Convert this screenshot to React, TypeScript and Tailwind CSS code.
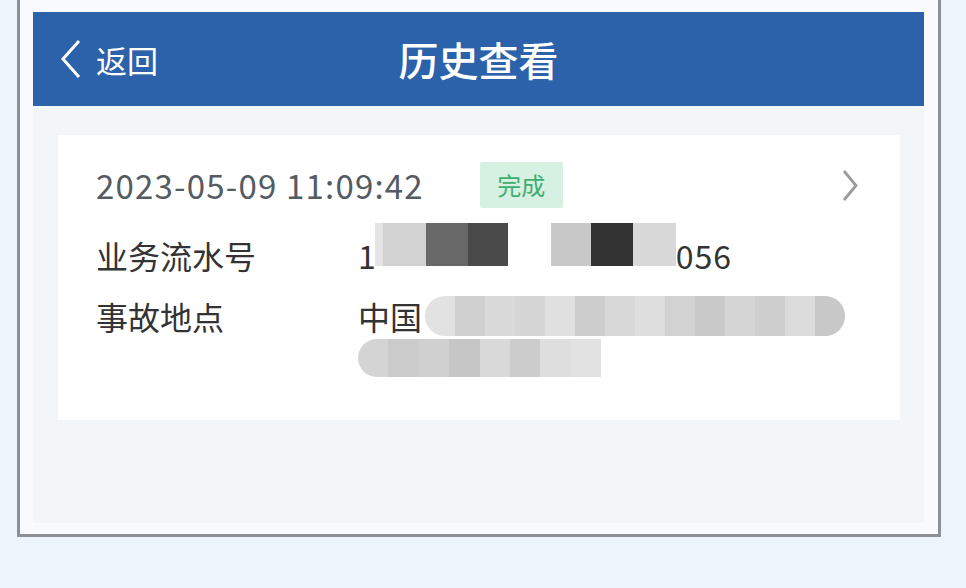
import React from "react";

const font = { fontFamily: '"Noto Sans CJK SC", "Noto Sans", sans-serif' };

// mosaic cells for the blurred serial number
const serialCells = [
  { w: 43, c: "bg-[#d2d2d2]" },
  { w: 42, c: "bg-[#686868]" },
  { w: 40, c: "bg-[#4a4a4a]" },
  { w: 43, c: "bg-white" },
  { w: 40, c: "bg-[#c8c8c8]" },
  { w: 42, c: "bg-[#333333]" },
  { w: 43, c: "bg-[#d8d8d8]" },
];

const addrTop = ["#e2e2e2", "#d0d0d0", "#dadada", "#d6d6d6", "#e0e0e0", "#cdcdcd", "#d8d8d8", "#dedede", "#d2d2d2", "#c9c9c9", "#d5d5d5", "#cfcfcf", "#dcdcdc", "#c8c8c8"];
const addrBottom = ["#d4d4d4", "#cbcbcb", "#d0d0d0", "#c6c6c6", "#d9d9d9", "#cccccc", "#dedede", "#e2e2e2"];

export default function App() {
  return (
    <div className="w-[966px] h-[588px] bg-[#edf4fc] overflow-hidden" style={font}>
      <div className="ml-[17px] w-[924px] h-[537px] border-x-[3px] border-b-[3px] border-[#8e9095] bg-[#f8fafd] pt-[12px] pl-[13px] pr-[14px]">
        <div className="h-[94px] bg-[#2b62a9] flex items-center relative">
          <div className="flex items-center pl-[27px] text-white">
            <svg width="22" height="40" viewBox="0 0 22 40" fill="none">
              <polyline points="19,2 3,20 19,38" stroke="#ffffff" strokeWidth="3" strokeLinejoin="miter" />
            </svg>
            <span className="ml-[14px] text-[31px] leading-none">返回</span>
          </div>
          <div className="absolute inset-0 flex items-center justify-center text-white text-[40px] leading-none font-medium">
            历史查看
          </div>
        </div>
        <div className="h-[417px] bg-[#f3f6f9] pt-[29px] pl-[25px]">
          <div className="w-[842px] h-[285px] bg-white pl-[38px] pt-[28px] relative">
            <div className="flex items-center h-[44px]">
              <span className="text-[33px] leading-none text-[#545b63] tracking-[1.2px]">2023-05-09 11:09:42</span>
              <span className="ml-[56px] h-[46px] w-[83px] bg-[#d6f0e1] text-[#3fae72] text-[24px] flex items-center justify-center rounded-[2px]">
                完成
              </span>
            </div>
            <svg className="absolute left-[783px] top-[34px]" width="18" height="33" viewBox="0 0 18 33" fill="none">
              <polyline points="3,2 15,16.5 3,31" stroke="#9b9b9b" strokeWidth="2.8" />
            </svg>
            <div className="flex items-center h-[44px] mt-[26px] text-[#333333] text-[32px] leading-none">
              <span className="w-[262px]">业务流水号</span>
              <span className="tracking-[1px]">1</span>
              <span className="flex h-[43px] -ml-[2px] -translate-y-[11px]">
                <span className="w-[8px] h-full bg-[#e4e4e4]" />
                {serialCells.map((s, i) => (
                  <span key={i} className={`h-full ${s.c}`} style={{ width: s.w }} />
                ))}
              </span>
              <span className="tracking-[1px]">056</span>
            </div>
            <div className="flex mt-[17px] text-[#333333] text-[32px] leading-none">
              <span className="w-[262px] h-[44px] flex items-center">事故地点</span>
              <div className="flex flex-col">
                <div className="flex items-center h-[44px]">
                  <span>中国</span>
                  <span className="ml-[3px] flex h-[40px] rounded-full overflow-hidden">
                    {addrTop.map((c, i) => (
                      <span key={i} className="w-[30px] h-full" style={{ background: c }} />
                    ))}
                  </span>
                </div>
                <div className="flex h-[38px] mt-[1px] rounded-l-full overflow-hidden w-[243px]">
                  {addrBottom.map((c, i) => (
                    <span key={i} className="w-[31px] h-full" style={{ background: c }} />
                  ))}
                </div>
              </div>
            </div>
          </div>
        </div>
      </div>
    </div>
  );
}
